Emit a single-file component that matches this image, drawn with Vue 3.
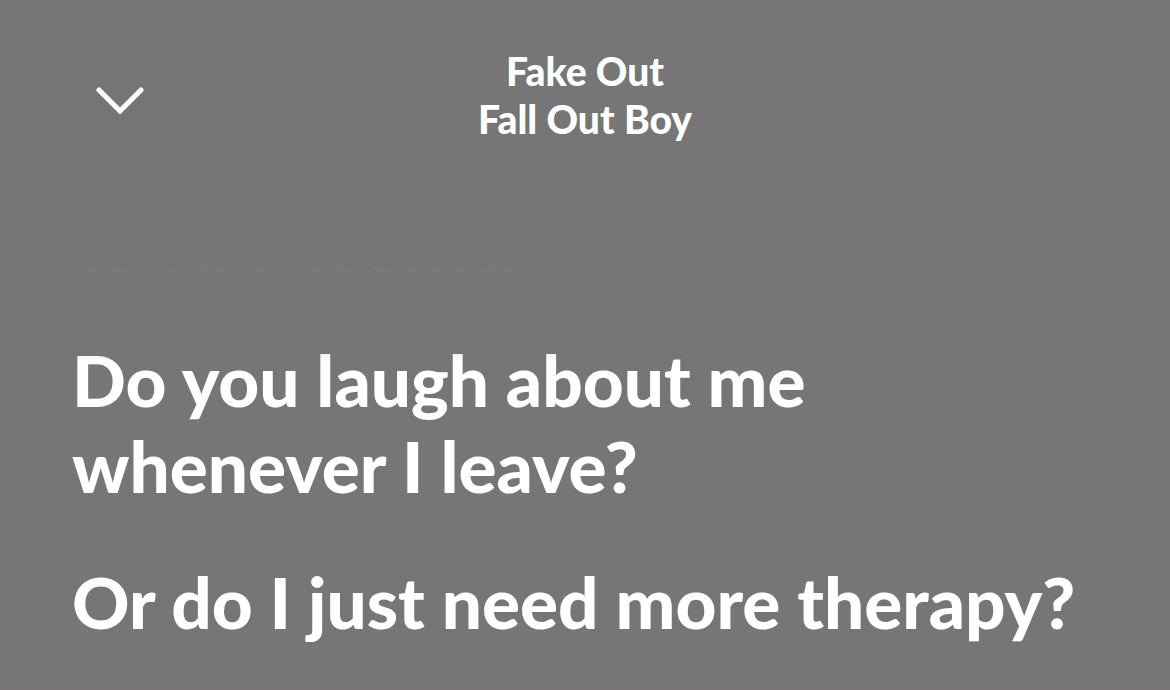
<script setup>
import { ref } from "vue";

const song = {
  title: "Fake Out",
  artist: "Fall Out Boy",
};

const lines = [
  "can be broken",
  "Do you laugh about me whenever I leave?",
  "Or do I just need more therapy?",
];

const open = ref(true);

function toggle() {
  open.value = !open.value;
}
</script>

<template>
  <div class="player">
    <header class="top-bar">
      <button class="close" type="button" aria-label="Close lyrics" :aria-expanded="open" @click="toggle">
        <svg viewBox="0 0 48 28" width="48" height="28" aria-hidden="true">
          <path d="M3 3 L24 24 L45 3" />
        </svg>
      </button>
      <div class="song">
        <h1>{{ song.title }}</h1>
        <p>{{ song.artist }}</p>
      </div>
    </header>

    <main v-show="open" class="lyrics">
      <p v-for="line in lines" :key="line">{{ line }}</p>
    </main>
  </div>
</template>

<style>
body {
  margin: 0;
  background: #767676;
}
</style>

<style scoped>
.player {
  display: flex;
  flex-direction: column;
  box-sizing: border-box;
  height: 100vh;
  overflow: hidden;
  border-bottom: 1px solid #787074;
  background: #767676;
  color: #fff;
  font-family: Lato, "Open Sans", sans-serif;
}

.top-bar {
  display: grid;
  grid-template-columns: 1fr auto 1fr;
  align-items: center;
  flex: none;
  padding: 47px 72px 123px;
}

.close {
  justify-self: start;
  display: flex;
  padding: 24px 24px 12px;
  border: 0;
  background: none;
  cursor: pointer;
}

.close path {
  fill: none;
  stroke: #fff;
  stroke-width: 5;
  stroke-linecap: round;
}

.song {
  text-align: center;
}

.song h1,
.song p {
  margin: 0;
  font-size: 39px;
  font-weight: 900;
  line-height: 48px;
}

.lyrics {
  display: flex;
  flex: 1;
  flex-direction: column;
  justify-content: flex-end;
  gap: 50px;
  min-height: 0;
  overflow: hidden;
  padding: 0 72px 44px;
  -webkit-mask-image: linear-gradient(transparent, #000 96px);
  mask-image: linear-gradient(transparent, #000 96px);
}

.lyrics p {
  margin: 0;
  font-size: 71px;
  font-weight: 900;
  line-height: 86px;
}
</style>
